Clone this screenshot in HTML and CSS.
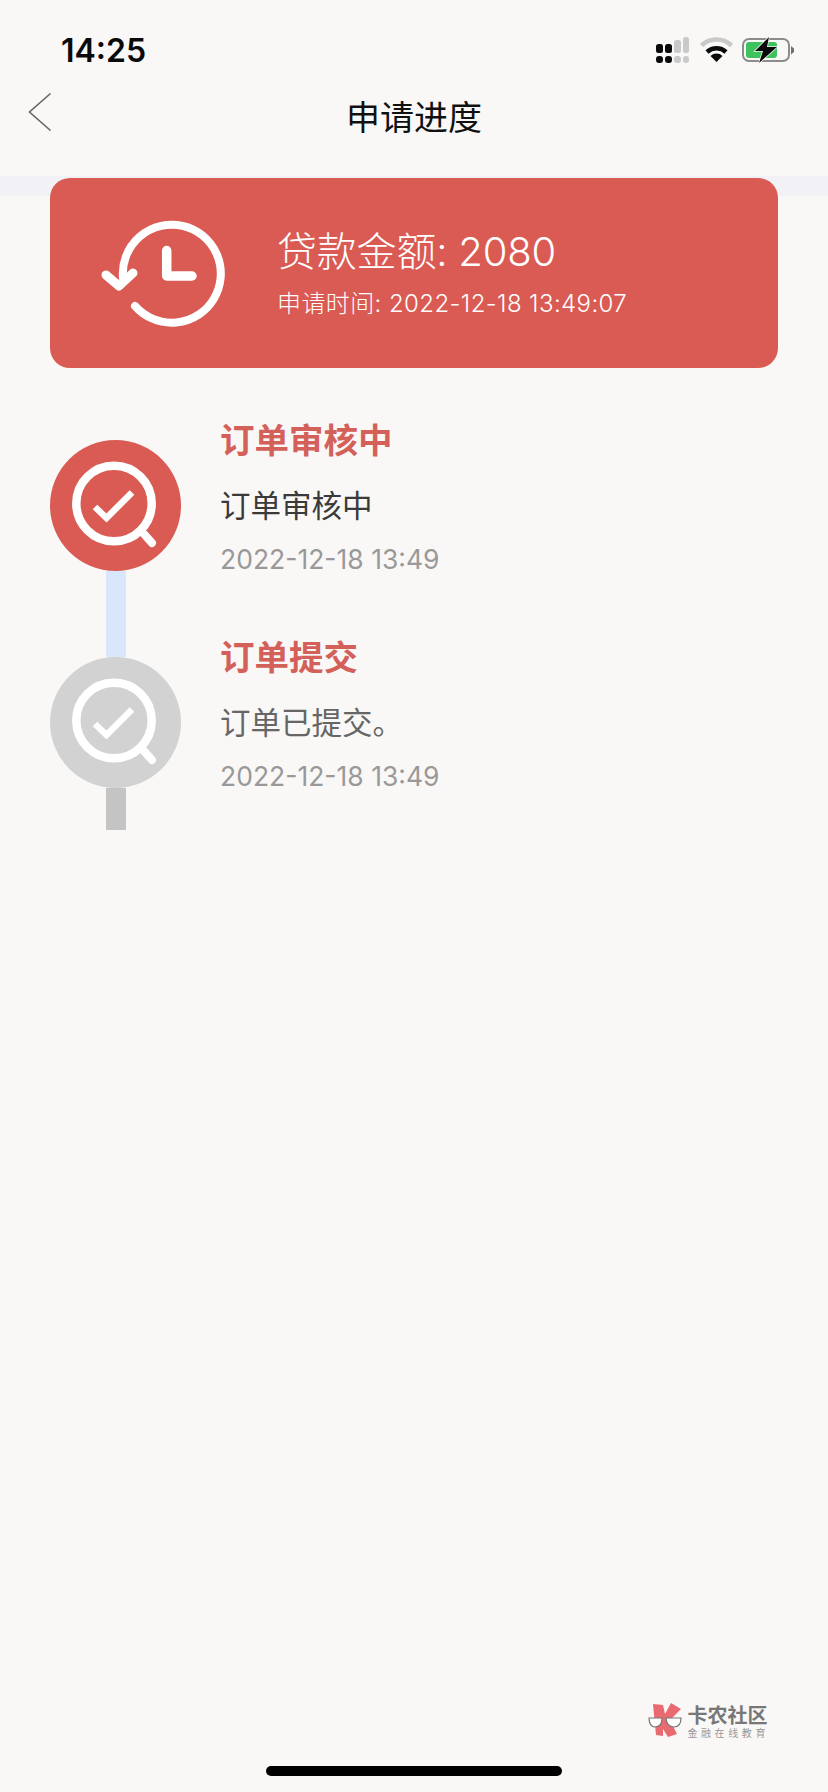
FILE: index.html
```html
<!DOCTYPE html>
<html lang="zh">
<head>
<meta charset="utf-8">
<title>申请进度</title>
<link rel="stylesheet" href="styles.css">
</head>
<body>
<svg class="defs" width="0" height="0">
  <defs>
    <g id="review" fill="none" stroke="#fff" stroke-linecap="round">
      <circle cx="64" cy="63.5" r="37.7" stroke-width="8.5"/>
      <path d="M94 94 L102 103" stroke-width="8"/>
      <path d="M45 67 L56.5 78 L82 52.5" stroke-width="6.5" stroke-linecap="butt"/>
    </g>
  </defs>
</svg>
<div class="page">
  <header class="status">
    <span class="clock">14:25</span>
    <div class="status-icons">
      <svg class="ic-signal" width="33" height="26" viewBox="0 0 33 26">
        <g fill="#0a0a0a">
          <rect x="0" y="7" width="7" height="9" rx="2.5"/><rect x="9" y="7" width="7" height="9" rx="2.5"/>
          <rect x="0" y="19" width="7" height="7" rx="3"/><rect x="9" y="19" width="7" height="7" rx="3"/>
        </g>
        <g fill="#c9c9c9">
          <rect x="18" y="3" width="7" height="13" rx="2.5"/><rect x="27" y="0" width="6" height="16" rx="2.5"/>
          <rect x="18" y="19" width="7" height="7" rx="3"/><rect x="27" y="19" width="6" height="7" rx="3"/>
        </g>
      </svg>
      <svg class="ic-wifi" width="33" height="25" viewBox="0 0 33 25">
        <path d="M1.5 8.5 A22 22 0 0 1 31.5 8.5" fill="none" stroke="#c9c9c9" stroke-width="4.5"/>
        <path d="M7 15 A14 14 0 0 1 26 15" fill="none" stroke="#0a0a0a" stroke-width="4.5"/>
        <path d="M16.5 25 L10.5 19 A8.5 8.5 0 0 1 22.5 19 Z" fill="#0a0a0a"/>
      </svg>
      <svg class="ic-batt" width="53" height="28" viewBox="0 0 53 28">
        <rect x="1" y="3" width="46" height="22" rx="6" fill="none" stroke="#8c8c8c" stroke-width="2"/>
        <rect x="4" y="6" width="31" height="16" rx="3" fill="#3dc25e"/>
        <path d="M49 10 L52 12.5 V16 L49 18.5 Z" fill="#707070"/>
        <path d="M27 1 L13 15 H21 L17 27 L35 11 H25 Z" fill="#0a0a0a" stroke="#f9f8f6" stroke-width="1.5" paint-order="stroke"/>
      </svg>
    </div>
  </header>

  <nav class="nav">
    <svg class="back" width="24" height="40" viewBox="0 0 24 40"><path d="M22.5 1.5 L1.5 20 L22.5 38.5" fill="none" stroke="#666" stroke-width="1.6"/></svg>
    <h1 class="nav-title">申请进度</h1>
  </nav>

  <section class="summary">
    <div class="card">
      <svg class="card-icon" width="130" height="116" viewBox="0 0 130 116">
        <g fill="none" stroke="#fff" stroke-linecap="round" stroke-linejoin="round">
          <path d="M25 63 A49 49 0 1 1 37 91" stroke-width="8"/>
          <path d="M8 60 L21 71 L35 58" stroke-width="9"/>
          <path d="M68.7 35.5 V61 H94" stroke-width="9.5"/>
        </g>
      </svg>
      <div class="card-text">
        <div class="amount">贷款金额: 2080</div>
        <div class="applied">申请时间: 2022-12-18 13:49:07</div>
      </div>
    </div>
  </section>

  <ol class="timeline">
    <li class="step">
      <div class="rail">
        <div class="dot dot-active">
          <svg width="131" height="131" viewBox="0 0 131 131"><use href="#review"/></svg>
        </div>
        <div class="line line-blue"></div>
      </div>
      <div class="step-text">
        <div class="step-title">订单审核中</div>
        <div class="step-desc">订单审核中</div>
        <div class="step-date">2022-12-18 13:49</div>
      </div>
    </li>
    <li class="step">
      <div class="rail">
        <div class="dot dot-muted">
          <svg width="131" height="131" viewBox="0 0 131 131"><use href="#review"/></svg>
        </div>
        <div class="line line-gray"></div>
      </div>
      <div class="step-text">
        <div class="step-title">订单提交</div>
        <div class="step-desc step-desc-muted">订单已提交。</div>
        <div class="step-date">2022-12-18 13:49</div>
      </div>
    </li>
  </ol>

  <footer class="foot">
    <div class="logo">
      <svg width="35" height="35" viewBox="0 0 35 35">
        <path d="M5 1 L15 2 L17 11 L23 0 L33 6 L22 17 L29 31 L20 34 L15 26 L15 33 L8 32 Z" fill="#e96a70"/>
        <g fill="#fff" stroke="#777" stroke-width="1.2">
          <path d="M1 15 H14 C14 21 11 24 7 24 C3 24 1 20 1 15 Z"/>
          <path d="M18 15 H33 C33 21 30 24 26 24 C21 24 18 20 18 15 Z"/>
        </g>
      </svg>
      <div class="logo-text">
        <div class="logo-name">卡农社区</div>
        <div class="logo-sub">金融在线教育</div>
      </div>
    </div>
    <div class="home-bar"></div>
  </footer>
</div>
</body>
</html>
```
FILE: styles.css
```css
* { box-sizing: border-box; }
html, body { margin: 0; padding: 0; }
body {
  background: #f9f8f6;
  font-family: "Inter", "Noto Sans CJK SC", sans-serif;
  color: #333;
}
.page {
  width: 828px;
  height: 1792px;
  display: flex;
  flex-direction: column;
  overflow: hidden;
}
.status {
  height: 76px;
  padding: 33px 33px 0 61px;
  display: flex;
  justify-content: space-between;
  align-items: flex-start;
}
.clock {
  font-size: 32px;
  line-height: 36px;
  font-weight: 600;
  color: #0a0a0a;
}
.status-icons {
  display: flex;
  align-items: flex-start;
  gap: 11px;
  padding-top: 4px;
}
.ic-batt { margin: -1px 0 0 -2px; }
.nav {
  height: 100px;
  display: flex;
  justify-content: center;
  position: relative;
}
.back { position: absolute; left: 28px; top: 16px; }
.nav-title {
  margin: 0;
  padding-top: 18px;
  font-size: 34px;
  line-height: 48px;
  font-weight: 400;
  color: #111;
}
.summary {
  padding: 2px 50px 0;
  background: linear-gradient(#f2f1f6, #f2f1f6) top / 100% 20px no-repeat;
}
.card {
  height: 190px;
  border-radius: 20px;
  background: #da5b53;
  color: #fff;
  display: flex;
  align-items: center;
  padding: 0 0 0 48px;
}
.card-icon { flex: none; }
.card-text {
  margin-left: 49px;
  padding-bottom: 2px;
  display: flex;
  flex-direction: column;
}
.amount { font-size: 40px; line-height: 56px; font-weight: 300; letter-spacing: -0.2px; margin-bottom: 7px; }
.applied { font-size: 24px; line-height: 34px; font-weight: 300; letter-spacing: 0.4px; }
.timeline {
  list-style: none;
  margin: 72px 0 0;
  padding: 0 0 0 50px;
}
.step { display: flex; }
.rail {
  width: 131px;
  flex: none;
  display: flex;
  flex-direction: column;
  align-items: center;
}
.dot { width: 131px; height: 131px; border-radius: 50%; flex: none; }
.dot svg { display: block; }
.dot-active { background: #da5b53; }
.dot-muted { background: #d2d2d2; }
.line { width: 20px; }
.line-blue { height: 86px; background: #d8e7fb; }
.line-gray { height: 42px; background: #c4c4c4; }
.step-text {
  margin: -23px 0 0 39px;
  display: flex;
  flex-direction: column;
}
.step-title { font-size: 34.5px; line-height: 48px; font-weight: 700; color: #d4605a; }
.step-desc { margin-top: 20px; font-size: 30.5px; line-height: 42px; color: #3a3a3a; font-weight: 400; }
.step-desc-muted { color: #666; }
.step-date { margin-top: 14px; font-size: 26.5px; line-height: 36px; color: #999; font-weight: 400; }
.foot {
  margin-top: auto;
  display: flex;
  flex-direction: column;
  align-items: stretch;
}
.logo {
  align-self: flex-end;
  margin-right: 59px;
  display: flex;
  gap: 4px;
  align-items: flex-start;
}
.logo-text { display: flex; flex-direction: column; padding-top: 2px; }
.logo-name { font-size: 20px; line-height: 22px; font-weight: 700; color: #777; }
.logo-sub { font-size: 10px; line-height: 12px; letter-spacing: 3.6px; color: #999; white-space: nowrap; }
.home-bar {
  width: 296px;
  height: 10px;
  margin: 27px auto 16px;
  border-radius: 5px;
  background: #000;
}
.defs { position: absolute; }
```
